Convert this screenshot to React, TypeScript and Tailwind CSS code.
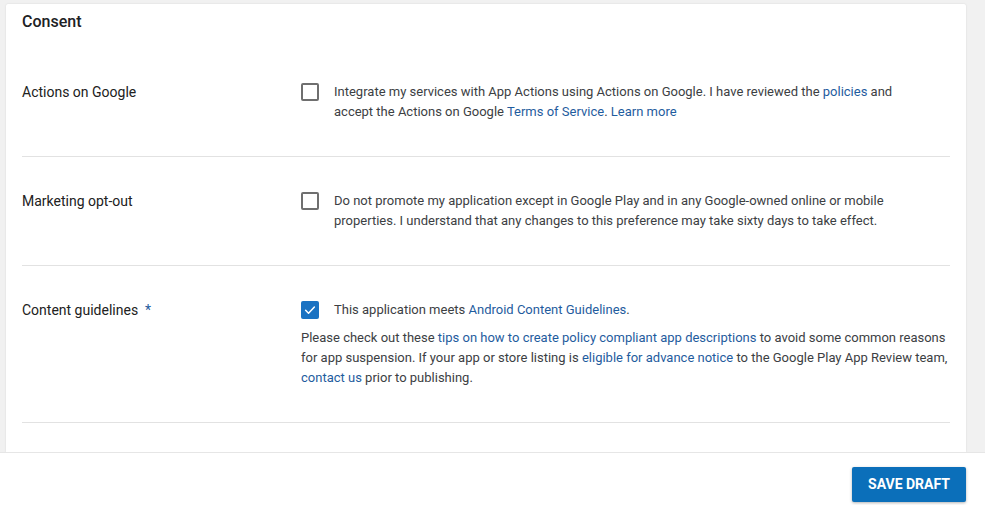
import React from 'react';

const Link = ({ children }: { children: React.ReactNode }) => (
  <a className="text-[#1f5c9e] cursor-pointer">{children}</a>
);

const Box = ({ checked }: { checked?: boolean }) =>
  checked ? (
    <span className="flex h-[18px] w-[18px] shrink-0 items-center justify-center rounded-[2px] bg-[#1a72c2]">
      <svg width="14" height="14" viewBox="0 0 24 24" fill="none" stroke="white" strokeWidth="2.6" strokeLinecap="round" strokeLinejoin="round">
        <path d="M4.5 12.5l5 5L19.5 7" />
      </svg>
    </span>
  ) : (
    <span className="block h-[18px] w-[18px] shrink-0 rounded-[2px] border-2 border-[#6f6f6f]" />
  );

const Row = ({ label, required, checked, children, extra, pad }: any) => (
  <div className={`flex border-b border-[#e2e2e2] ${pad}`}>
    <div className="w-[279px] shrink-0 text-[14px] leading-5 text-[#212121]">
      {label}
      {required && <span className="ml-[7px] text-[#1f5c9e]">*</span>}
    </div>
    <div className="flex-1">
      <div className="flex items-start">
        <div className="mt-px mr-[15px]"><Box checked={checked} /></div>
        <p className="text-[13px] leading-5 text-[#3c4043]">{children}</p>
      </div>
      {extra}
    </div>
  </div>
);

export default function App() {
  return (
    <div className="flex h-[505px] w-[985px] flex-col overflow-hidden bg-[#f1f1f1]" style={{ fontFamily: 'Roboto, "Liberation Sans", sans-serif' }}>
      <div className="flex-1 overflow-hidden pl-[6px] pr-[19px] pt-[4px]">
        <div className="h-full rounded-t-[2px] bg-white pl-4 pr-4 shadow-[0_0_2px_rgba(0,0,0,0.12)]">
          <h2 className="pt-[8px] text-[16px] font-medium leading-5 text-[#202124]">Consent</h2>
          <Row label="Actions on Google" pad="pt-[50px] pb-[34px]">
            Integrate my services with App Actions using Actions on Google. I have reviewed the <Link>policies</Link> and
            <br />
            accept the Actions on Google <Link>Terms of Service</Link>. <Link>Learn more</Link>
          </Row>
          <Row label="Marketing opt-out" pad="pt-[34px] pb-[34px]">
            Do not promote my application except in Google Play and in any Google-owned online or mobile
            <br />
            properties. I understand that any changes to this preference may take sixty days to take effect.
          </Row>
          <Row
            label="Content guidelines"
            required
            checked
            pad="pt-[34px] pb-[34px]"
            extra={
              <p className="mt-2 text-[13px] leading-5 text-[#3c4043]">
                Please check out these <Link>tips on how to create policy compliant app descriptions</Link> to avoid some common reasons
                <br />
                for app suspension. If your app or store listing is <Link>eligible for advance notice</Link> to the Google Play App Review team,
                <br />
                <Link>contact us</Link> prior to publishing.
              </p>
            }
          >
            This application meets <Link>Android Content Guidelines</Link>.
          </Row>
        </div>
      </div>
      <div className="flex h-[53px] shrink-0 justify-end border-t border-[#e6e6e6] bg-white pr-[19px] pt-[14px]">
        <button className="h-[35px] w-[114px] rounded-[2px] bg-[#0b6fba] text-[14px] font-bold text-white shadow-[0_1px_3px_rgba(0,0,0,0.3)]">
          SAVE DRAFT
        </button>
      </div>
    </div>
  );
}
